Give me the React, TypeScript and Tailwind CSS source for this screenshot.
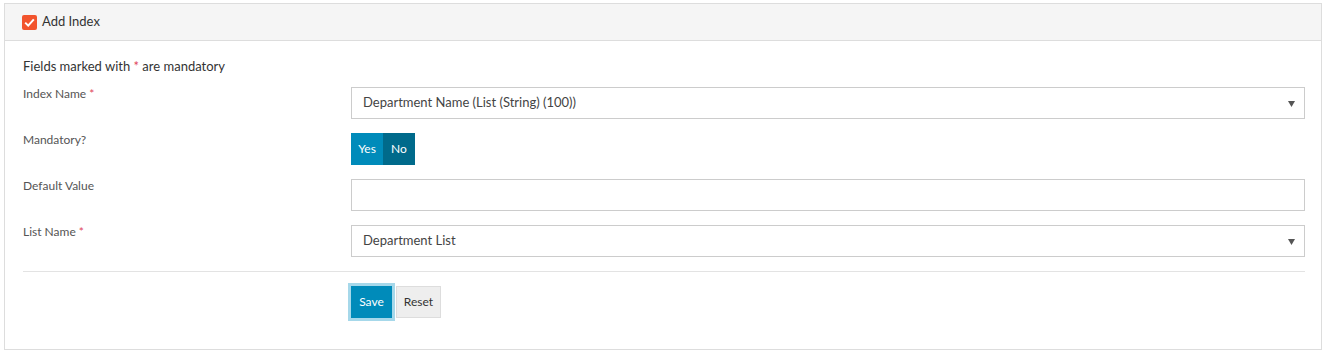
import { ReactNode } from "react"

const font = { fontFamily: '"Lato", "Liberation Sans", sans-serif' }

const Req = () => <span className="text-[#e0455a]"> *</span>

const Caret = () => (
  <svg width="7" height="6" viewBox="0 0 7 6" className="absolute right-[9px] top-[13px]">
    <path d="M0 0h7L3.5 6z" fill="#555" />
  </svg>
)

const Row = ({ label, children }: { label: ReactNode; children: ReactNode }) => (
  <div className="flex items-start">
    <div className="w-[328px] shrink-0 -mt-[1px] text-[12px] leading-[16px] text-[#555]">{label}</div>
    <div className="flex-1">{children}</div>
  </div>
)

const Select = ({ value }: { value: string }) => (
  <div className="relative flex h-[32px] items-center border border-[#ccc] bg-white pl-[11px] text-[13px] text-[#444]">
    {value}
    <Caret />
  </div>
)

export default function App() {
  return (
    <div className="bg-white pt-[3px] pl-[4px] pr-[4px] text-[#333]" style={font}>
      <div className="border border-[#ddd] bg-white">
        <div className="flex h-[37px] items-center gap-[5px] border-b border-[#ddd] bg-[#f5f5f5] pl-[17px]">
          <span className="flex h-[15px] w-[15px] items-center justify-center rounded-[2px] bg-[#f2542d]">
            <svg width="11" height="9" viewBox="0 0 11 9">
              <path d="M1.2 4.6l3 3L9.8 1.4" stroke="#fff" strokeWidth="2" fill="none" />
            </svg>
          </span>
          <span className="text-[13px] text-[#333]">Add Index</span>
        </div>
        <div className="pl-[18px] pr-[16px] pt-[17px] pb-[31px]">
          <div className="text-[13px] leading-[16px] text-[#333]">
            Fields marked with<Req /> are mandatory
          </div>
          <div className="mt-[13px] flex flex-col gap-[14px]">
            <Row label={<>Index Name<Req /></>}>
              <Select value="Department Name (List (String) (100))" />
            </Row>
            <Row label="Mandatory?">
              <div className="flex h-[32px] text-[12px] text-white">
                <span className="flex w-[32px] items-center justify-center bg-[#008bba]">Yes</span>
                <span className="flex w-[32px] items-center justify-center bg-[#006a8b]">No</span>
              </div>
            </Row>
            <Row label="Default Value">
              <div className="h-[32px] border border-[#ccc] bg-white" />
            </Row>
            <Row label={<>List Name<Req /></>}>
              <Select value="Department List" />
            </Row>
          </div>
          <div className="mt-[14px] border-t border-[#e3e3e3]" />
          <div className="mt-[14px] flex items-center gap-[4px] pl-[328px]">
            <button className="h-[32px] w-[41px] bg-[#008bba] text-[12px] text-white outline-[3px] outline-[#a6d8ea]">
              Save
            </button>
            <button className="h-[32px] w-[45px] border border-[#ddd] bg-[#eee] text-[12px] text-[#333]">
              Reset
            </button>
          </div>
        </div>
      </div>
    </div>
  )
}
